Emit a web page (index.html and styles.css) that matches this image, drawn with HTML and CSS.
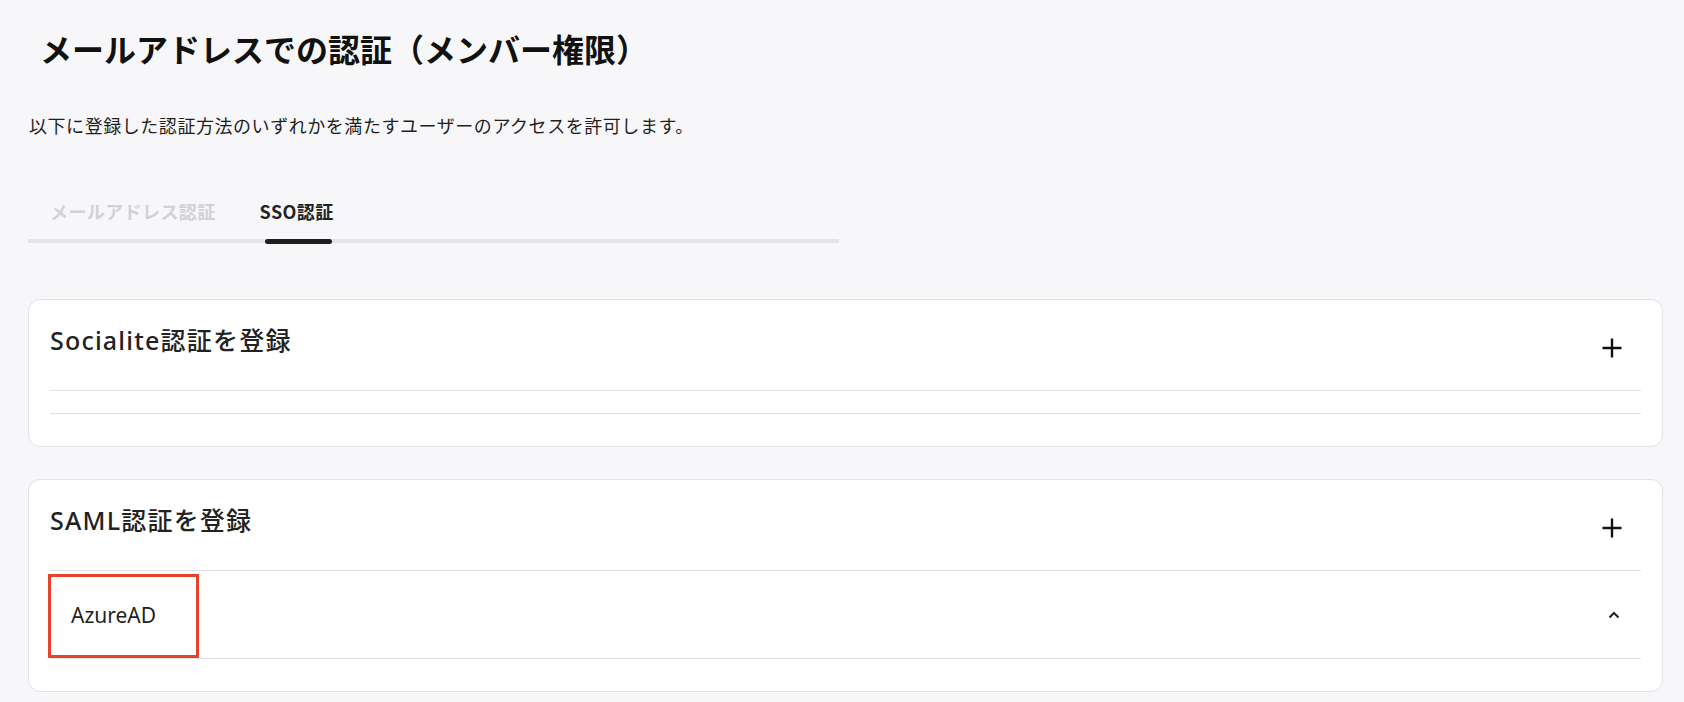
FILE: index.html
```html
<!DOCTYPE html>
<html lang="ja">
<head>
<meta charset="utf-8">
<title>メールアドレスでの認証（メンバー権限）</title>
<link rel="stylesheet" href="styles.css">
</head>
<body>
<main class="page">
  <h1 class="title">メールアドレスでの認証（メンバー権限）</h1>
  <p class="desc">以下に登録した認証方法のいずれかを満たすユーザーのアクセスを許可します。</p>

  <nav class="tabbar">
    <div class="tabs">
      <span class="tab">メールアドレス認証</span>
      <span class="tab active">SSO認証</span>
    </div>
    <div class="track"><span class="indicator"></span></div>
  </nav>

  <section class="card">
    <div class="card-head">
      <h2 class="card-title">Socialite認証を登録</h2>
      <button class="add" aria-label="追加">
        <svg width="20" height="20" viewBox="0 0 20 20"><path d="M10 0.5V19.5M0.5 10H19.5" stroke="#111" stroke-width="2.4" fill="none"/></svg>
      </button>
    </div>
    <div class="list empty"></div>
  </section>

  <section class="card">
    <div class="card-head">
      <h2 class="card-title">SAML認証を登録</h2>
      <button class="add" aria-label="追加">
        <svg width="20" height="20" viewBox="0 0 20 20"><path d="M10 0.5V19.5M0.5 10H19.5" stroke="#111" stroke-width="2.4" fill="none"/></svg>
      </button>
    </div>
    <div class="list">
      <div class="row">
        <span class="row-name">AzureAD</span>
        <svg class="chev" width="20" height="20" viewBox="0 0 20 20"><path d="M5.5 12.5L10 8L14.5 12.5" stroke="#222" stroke-width="2" fill="none"/></svg>
        <span class="highlight"></span>
      </div>
    </div>
  </section>
</main>
</body>
</html>
```

FILE: styles.css
```css
* { box-sizing: border-box; }

html, body {
  margin: 0;
  padding: 0;
  background: #f7f7f9;
}

body {
  font-family: "Noto Sans", "Noto Sans CJK JP", sans-serif;
  color: #1f1f1f;
}

.page {
  padding: 25px 21px 12px 28px;
}

.title {
  margin: 0 0 0 12px;
  font-size: 32px;
  line-height: 46px;
  font-weight: 700;
  color: #111;
  font-family: "Noto Sans CJK JP", sans-serif;
}

.desc {
  margin: 41px 0 0 1px;
  font-size: 18px;
  line-height: 27px;
  letter-spacing: 0.55px;
  font-family: "Noto Sans CJK JP", sans-serif;
  color: #1f1f1f;
}

.tabbar {
  width: 811px;
  margin-top: 59px;
}

.tabs {
  display: flex;
  gap: 44px;
  padding: 0 22px 14px;
}

.tab {
  font-family: "Noto Sans CJK JP", sans-serif;
  font-size: 18px;
  line-height: 27px;
  font-weight: 700;
  letter-spacing: 0.4px;
  color: #d2d2d6;
}

.tab.active {
  color: #222;
}

.track {
  display: flex;
  align-items: center;
  height: 4px;
  background: #e4e4e8;
}

.indicator {
  display: block;
  margin-left: 237px;
  width: 67px;
  height: 5px;
  border-radius: 3px;
  background: #1e1e1e;
}

.card {
  margin-top: 56px;
  background: #fff;
  border: 1px solid #e2e2e6;
  border-radius: 12px;
  padding: 0 21px 32px;
}

.card + .card {
  margin-top: 32px;
}

.card-head {
  display: flex;
  justify-content: space-between;
  align-items: flex-start;
  height: 91px;
  padding-top: 22px;
  border-bottom: 1px solid #e1e1e4;
}

.card-title {
  margin: 0;
  font-size: 25px;
  line-height: 36px;
  font-weight: 500;
  letter-spacing: 1.2px;
  color: #222;
}

.add {
  display: flex;
  align-items: center;
  justify-content: center;
  width: 40px;
  height: 40px;
  margin: 6px 9px 0 0;
  padding: 0;
  border: 0;
  background: none;
}

.list {
  border-bottom: 1px solid #e1e1e4;
}

.list.empty {
  height: 23px;
}

.row {
  position: relative;
  display: flex;
  align-items: center;
  justify-content: space-between;
  height: 87px;
  padding: 0 17px 0 21px;
}

.row-name {
  font-size: 21px;
  line-height: 30px;
  color: #1f1f1f;
}

.highlight {
  position: absolute;
  left: -2px;
  top: 3px;
  width: 151px;
  height: 84px;
  border: 3.5px solid #e6432c;
  pointer-events: none;
}
```
